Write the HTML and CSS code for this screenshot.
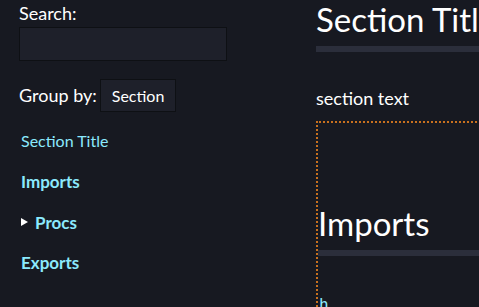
FILE: index.html
```html
<!DOCTYPE html>
<html lang="en">
<head>
<meta charset="utf-8">
<title>Docs</title>
<link rel="stylesheet" href="styles.css">
</head>
<body>
<div class="page">
  <aside class="sidebar">
    <div class="search">
      <label class="search-label" for="q">Search:</label>
      <input class="search-input" id="q" type="text">
    </div>
    <div class="group">
      <span class="group-label">Group by:</span>
      <span class="group-select">Section</span>
    </div>
    <ul class="toc">
      <li class="toc-item"><a class="toc-section" href="#s">Section Title</a></li>
      <li class="toc-item"><a class="toc-group" href="#imports">Imports</a></li>
      <li class="toc-item"><span class="marker"></span><a class="toc-group" href="#procs">Procs</a></li>
      <li class="toc-item"><a class="toc-group" href="#exports">Exports</a></li>
    </ul>
  </aside>
  <main class="content">
    <h1 class="heading first" id="s">Section Title</h1>
    <p class="text">section text</p>
    <div class="box">
      <h1 class="heading" id="imports">Imports</h1>
      <div class="code"><a class="code-link" href="#h">h</a></div>
    </div>
  </main>
</div>
</body>
</html>
```
FILE: styles.css
```css
html, body {
  margin: 0;
  padding: 0;
  background: #171921;
  overflow: hidden;
}
body {
  font-family: "Lato", "Liberation Sans", sans-serif;
  font-size: 18px;
  line-height: 1.5;
  color: #ffffff;
}
.page {
  display: grid;
  grid-template-columns: 297px 420px;
  padding-left: 19px;
  width: 760px;
}
.sidebar {
  display: flex;
  flex-direction: column;
}
.search {
  display: flex;
  flex-direction: column;
}
.search-label {
  height: 27px;
}
.search-input {
  box-sizing: border-box;
  width: 208px;
  height: 34px;
  margin: 0;
  background: #1e202a;
  border: 1px solid #0e1014;
  color: #fff;
}
.group {
  display: flex;
  align-items: center;
  gap: 3px;
  margin-top: 18px;
}
.group-select {
  box-sizing: border-box;
  height: 33px;
  padding: 0 11px;
  display: flex;
  align-items: center;
  font-size: 16px;
  background: #1e202a;
  border: 1px solid #0e1014;
}
.toc {
  list-style: none;
  margin: 9px 0 0;
  padding: 0 0 0 2px;
}
.toc-item {
  height: 40.5px;
  display: flex;
  align-items: center;
}
.toc-section {
  color: #8be9fd;
  text-decoration: none;
  font-size: 16px;
}
.toc-group {
  color: #8be9fd;
  text-decoration: none;
  font-weight: 700;
  font-size: 17px;
}
.marker {
  width: 0;
  height: 0;
  border-top: 4px solid transparent;
  border-bottom: 4px solid transparent;
  border-left: 7px solid #ffffff;
  margin-right: 7px;
}
.content {
  min-width: 0;
}
.heading {
  font-size: 33px;
  font-weight: 400;
  line-height: 38px;
  margin: 81px 0 33px;
  padding-bottom: 8px;
  border-bottom: 6px solid #2b2e3b;
  white-space: nowrap;
}
.heading.first {
  margin-top: 0;
}
.text {
  margin: 0 0 8.5px;
}
.box {
  border: 2px dotted #c8701e;
}
.code {
  padding-left: 1px;
  padding-top: 1px;
}
.code-link {
  color: #8be9fd;
  text-decoration: none;
  font-family: "DejaVu Sans Mono", monospace;
  font-size: 16px;
}
```
